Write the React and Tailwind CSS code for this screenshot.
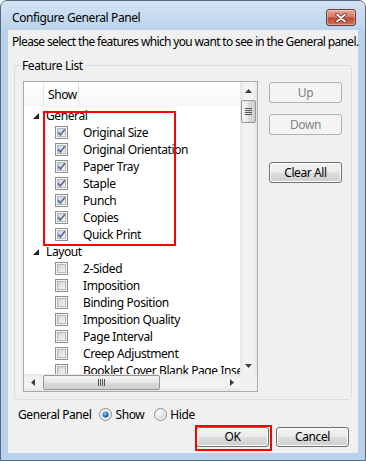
import React from 'react';

const general = ['Original Size', 'Original Orientation', 'Paper Tray', 'Staple', 'Punch', 'Copies', 'Quick Print'];
const layout = ['2-Sided', 'Imposition', 'Binding Position', 'Imposition Quality', 'Page Interval', 'Creep Adjustment', 'Booklet Cover Blank Page Insertion'];

// small win7-ish checkbox
const Check = ({ checked }) => (
  <svg width="13" height="13" viewBox="0 0 13 13" className="shrink-0">
    <defs>
      <linearGradient id="cbFill" x1="0" y1="0" x2="1" y2="1">
        <stop offset="0" stopColor="#cdd1d7" />
        <stop offset="1" stopColor="#f7f7f7" />
      </linearGradient>
    </defs>
    <rect x="0.5" y="0.5" width="12" height="12" fill="#f5f5f5" stroke="#8f8f8f" />
    <rect x="2.5" y="2.5" width="8" height="8" fill="url(#cbFill)" stroke="#b3b7bd" />
    {checked && <path d="M3.2 6.4 L5.4 8.9 L9.9 3.3" fill="none" stroke="#5a6c9e" strokeWidth="1.6" />}
  </svg>
);

const Radio = ({ on }) => (
  <svg width="13" height="13" viewBox="0 0 13 13" className="shrink-0">
    <defs>
      <radialGradient id="rdOff" cx="0.35" cy="0.3" r="0.8">
        <stop offset="0" stopColor="#ffffff" />
        <stop offset="1" stopColor="#cfd2d6" />
      </radialGradient>
      <radialGradient id="rdOn" cx="0.4" cy="0.35" r="0.7">
        <stop offset="0" stopColor="#8fd3f7" />
        <stop offset="0.6" stopColor="#1f7dc4" />
        <stop offset="1" stopColor="#0b4c8c" />
      </radialGradient>
    </defs>
    <circle cx="6.5" cy="6.5" r="6" fill="#f4f4f4" stroke="#8a8a8a" />
    <circle cx="6.5" cy="6.5" r="4.3" fill="url(#rdOff)" />
    {on && <circle cx="6.5" cy="6.5" r="3" fill="url(#rdOn)" />}
  </svg>
);

const Btn = ({ children, disabled, h = 'h-[21px]' }) => (
  <div
    className={`${h} w-[73px] rounded-[3px] border flex items-center justify-center leading-none ${
      disabled
        ? 'border-[#adb2b5] bg-[#f4f4f4] text-[#838383]'
        : 'border-[#707070] bg-[linear-gradient(#f2f2f2_0%,#ebebeb_48%,#dddddd_52%,#cfcfcf_100%)] shadow-[inset_0_0_0_1px_#fcfcfc] text-black'
    }`}
  >
    {children}
  </div>
);

const Arrow = ({ dir }) => {
  const d = {
    up: 'M0 4 L3.5 0 L7 4 Z',
    down: 'M0 0 L7 0 L3.5 4 Z',
    left: 'M4 0 L4 7 L0 3.5 Z',
    right: 'M0 0 L4 3.5 L0 7 Z',
  }[dir];
  const vert = dir === 'up' || dir === 'down';
  return (
    <svg width={vert ? 7 : 4} height={vert ? 4 : 7} viewBox={vert ? '0 0 7 4' : '0 0 4 7'}>
      <path d={d} fill="#3c3c3c" />
    </svg>
  );
};

const Expander = () => (
  <svg width="6" height="6" viewBox="0 0 6 6" className="shrink-0">
    <path d="M6 0 L6 6 L0 6 Z" fill="#262626" />
  </svg>
);

const GroupRow = ({ label }) => (
  <div className="h-[17px] flex items-center">
    <div className="w-[22px] shrink-0 pl-[9px] flex items-center">
      <Expander />
    </div>
    <span>{label}</span>
  </div>
);

const ItemRow = ({ label, checked }) => (
  <div className="h-[17px] flex items-center whitespace-nowrap">
    <div className="w-[59px] shrink-0 pl-[31px] flex items-center">
      <Check checked={checked} />
    </div>
    <span>{label}</span>
  </div>
);

export default function App() {
  return (
    <div className="w-[366px] h-[461px] border border-[#56687c] rounded-t-[7px] bg-[#b9d1ea] flex flex-col overflow-hidden font-['Noto_Sans',sans-serif] text-[12px] tracking-[-0.4px] text-black">
      {/* title bar */}
      <div className="h-[29px] shrink-0 flex items-center justify-between pl-[11px] pr-[9px] pt-[4px] bg-[linear-gradient(#d3e3f4,#bcd3eb)]">
        <span className="leading-none">Configure General Panel</span>
        <div className="w-[30px] h-[17px] rounded-[3px] border border-[#6d3a31] bg-[linear-gradient(#e9a99b_0%,#d27a68_45%,#c04b33_55%,#d2735b_100%)] shadow-[inset_0_0_0_1px_rgba(255,255,255,0.35)] flex items-center justify-center">
          <svg width="12" height="10" viewBox="0 0 12 10">
            <path d="M2 1.5 L10 8.5 M10 1.5 L2 8.5" stroke="#5a2a22" strokeWidth="3.4" strokeLinecap="round" />
            <path d="M2 1.5 L10 8.5 M10 1.5 L2 8.5" stroke="#ffffff" strokeWidth="1.8" strokeLinecap="round" />
          </svg>
        </div>
      </div>

      {/* client area */}
      <div className="flex-1 mx-[7px] mb-[7px] bg-[#f0f0f0] flex flex-col">
        <p className="pl-[4px] pt-[4px] leading-[16px] whitespace-nowrap tracking-[-0.65px]">Please select the features which you want to see in the General panel.</p>

        {/* group box */}
        <div className="relative ml-[6px] mt-[15px] w-[338px] h-[335px] border border-[#d5dfe5] rounded-[3px] flex pl-[8px] pt-[15px]">
          <span className="absolute -top-[8px] left-[5px] px-[2px] bg-[#f0f0f0] leading-[15px]">Feature List</span>

          {/* tree */}
          <div className="w-[235px] h-[311px] border border-[#a5a9b0] bg-white flex flex-col">
            <div className="flex h-[292px]">
              <div className="relative w-[216px] overflow-hidden">
                <div className="h-[25px] flex bg-[linear-gradient(#ffffff,#f7f8f9)]">
                  <div className="w-[20px] border-r border-[#e3e5e8]" />
                  <div className="w-[35px] border-r border-[#e3e5e8] pl-[4px] flex items-center">Show</div>
                </div>
                <GroupRow label="General" />
                {general.map((g) => (
                  <ItemRow key={g} label={g} checked />
                ))}
                <GroupRow label="Layout" />
                {layout.map((l) => (
                  <ItemRow key={l} label={l} />
                ))}
                <div className="absolute left-[19px] top-[29px] w-[133px] h-[135px] border-2 border-[#ff0000]" />
              </div>

              {/* vertical scrollbar */}
              <div className="w-[17px] flex flex-col bg-[linear-gradient(90deg,#e6e6e6,#f2f2f2_25%,#f2f2f2_75%,#e6e6e6)]">
                <div className="h-[17px] flex items-center justify-center">
                  <Arrow dir="up" />
                </div>
                <div className="mt-[1px] mx-[1px] h-[23px] rounded-[2px] border border-[#979797] bg-[linear-gradient(90deg,#f4f4f4,#e6e6e6_50%,#d9d9d9_50%,#d0d0d0)] flex flex-col items-center justify-center gap-[1px]">
                  <div className="w-[7px] h-px bg-[#555]" />
                  <div className="w-[7px] h-px bg-[#555]" />
                  <div className="w-[7px] h-px bg-[#555]" />
                  <div className="w-[7px] h-px bg-[#555]" />
                </div>
                <div className="flex-1" />
                <div className="h-[17px] flex items-center justify-center">
                  <Arrow dir="down" />
                </div>
              </div>
            </div>

            {/* horizontal scrollbar */}
            <div className="h-[17px] flex">
              <div className="w-[216px] flex bg-[linear-gradient(#e6e6e6,#f2f2f2_25%,#f2f2f2_75%,#e6e6e6)]">
                <div className="w-[17px] flex items-center justify-center">
                  <Arrow dir="left" />
                </div>
                <div className="ml-[2px] my-[1px] w-[117px] rounded-[2px] border border-[#979797] bg-[linear-gradient(#f4f4f4,#e6e6e6_50%,#d9d9d9_50%,#d0d0d0)] flex items-center justify-center gap-[1px]">
                  <div className="w-px h-[7px] bg-[#555]" />
                  <div className="w-px h-[7px] bg-[#555]" />
                  <div className="w-px h-[7px] bg-[#555]" />
                  <div className="w-px h-[7px] bg-[#555]" />
                </div>
                <div className="flex-1" />
                <div className="w-[17px] flex items-center justify-center">
                  <Arrow dir="right" />
                </div>
              </div>
              <div className="w-[17px] bg-[#f0f0f0]" />
            </div>
          </div>

          {/* side buttons */}
          <div className="ml-[11px] mt-[1px] flex flex-col">
            <Btn disabled>Up</Btn>
            <div className="mt-[11px]">
              <Btn disabled>Down</Btn>
            </div>
            <div className="mt-[27px]">
              <Btn>Clear All</Btn>
            </div>
          </div>
        </div>

        {/* general panel show/hide */}
        <div className="mt-[7px] h-[15px] pl-[10px] flex items-center">
          <span>General Panel</span>
          <div className="ml-[8px]">
            <Radio on />
          </div>
          <span className="ml-[3px]">Show</span>
          <div className="ml-[10px]">
            <Radio />
          </div>
          <span className="ml-[3px]">Hide</span>
        </div>

        {/* dialog buttons */}
        <div className="mt-[5px] pr-[9px] flex justify-end gap-[7px]">
          <div className="relative">
            <Btn h="h-[20px]">OK</Btn>
            <div className="absolute -left-[1px] -top-[2px] w-[77px] h-[26px] border-2 border-[#ff0000]" />
          </div>
          <Btn h="h-[20px]">Cancel</Btn>
        </div>
      </div>
    </div>
  );
}
